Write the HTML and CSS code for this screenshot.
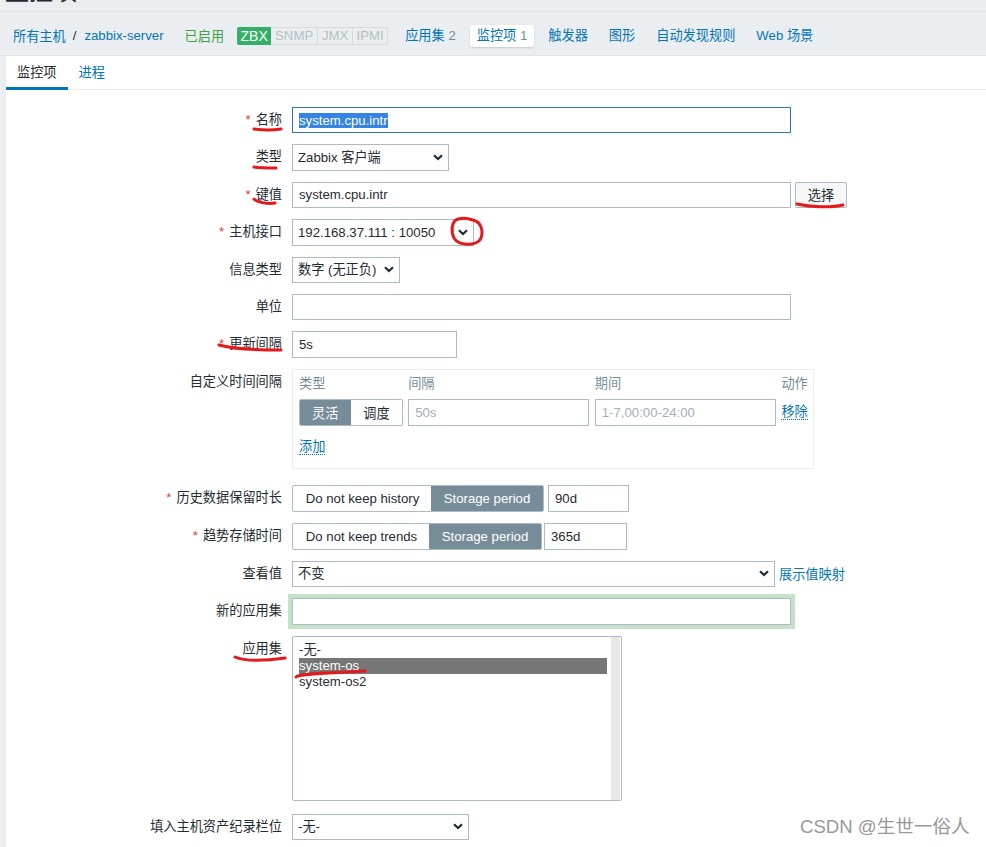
FILE: index.html
```html
<!DOCTYPE html>
<html lang="zh-CN">
<head>
    <meta charset="UTF-8">
    <title>监控项</title>
    <link rel="stylesheet" href="styles.css">
</head>
<body>
    <div class="Title"><h1>监控项</h1></div>

    <nav class="Nav">
        <a class="Nav-link" href="#">所有主机</a>
        <span class="Nav-sep">/</span>
        <a class="Nav-link" href="#">zabbix-server</a>
        <span class="Nav-status">已启用</span>
        <div class="Badges">
            <span class="Badge Badge--on">ZBX</span>
            <span class="Badge">SNMP</span>
            <span class="Badge">JMX</span>
            <span class="Badge">IPMI</span>
        </div>
        <a class="Nav-item" href="#">应用集 <span class="Nav-count">2</span></a>
        <a class="Nav-item Nav-item--active" href="#">监控项 <span class="Nav-count">1</span></a>
        <a class="Nav-item" href="#">触发器</a>
        <a class="Nav-item" href="#">图形</a>
        <a class="Nav-item" href="#">自动发现规则</a>
        <a class="Nav-item" href="#">Web 场景</a>
    </nav>

    <main class="Panel">
        <div class="Tabs">
            <a class="Tab Tab--active" href="#">监控项</a>
            <a class="Tab" href="#">进程</a>
        </div>

        <form class="Form" autocomplete="off">
            <label class="Form-label Form-label--req">名称</label>
            <div class="Form-field">
                <div class="Input Input--wide Input--focus"><span class="Input-selected">system.cpu.intr</span></div>
            </div>

            <label class="Form-label">类型</label>
            <div class="Form-field">
                <select class="Select Select--type"><option>Zabbix 客户端</option></select>
            </div>

            <label class="Form-label Form-label--req">键值</label>
            <div class="Form-field">
                <input class="Input Input--wide" type="text" value="system.cpu.intr">
                <button class="Button" type="button">选择</button>
            </div>

            <label class="Form-label Form-label--req">主机接口</label>
            <div class="Form-field">
                <select class="Select Select--iface"><option>192.168.37.111 : 10050</option></select>
            </div>

            <label class="Form-label">信息类型</label>
            <div class="Form-field">
                <select class="Select Select--info"><option>数字 (无正负)</option></select>
            </div>

            <label class="Form-label">单位</label>
            <div class="Form-field">
                <input class="Input Input--wide" type="text">
            </div>

            <label class="Form-label Form-label--req">更新间隔</label>
            <div class="Form-field">
                <input class="Input Input--delay" type="text" value="5s">
            </div>

            <label class="Form-label">自定义时间间隔</label>
            <div class="Intervals">
                <div class="Intervals-grid">
                    <span class="Intervals-head">类型</span>
                    <span class="Intervals-head">间隔</span>
                    <span class="Intervals-head">期间</span>
                    <span class="Intervals-head">动作</span>
                    <div class="Segment">
                        <span class="Segment-item Segment-item--on">灵活</span>
                        <span class="Segment-item">调度</span>
                    </div>
                    <input class="Input" type="text" placeholder="50s">
                    <input class="Input" type="text" placeholder="1-7,00:00-24:00">
                    <a class="Link" href="#">移除</a>
                </div>
                <a class="Link Intervals-add" href="#">添加</a>
            </div>

            <label class="Form-label Form-label--req">历史数据保留时长</label>
            <div class="Form-field Form-field--tall">
                <div class="Segment">
                    <span class="Segment-item Segment-item--history">Do not keep history</span>
                    <span class="Segment-item Segment-item--on Segment-item--period">Storage period</span>
                </div>
                <input class="Input Input--short" type="text" value="90d">
            </div>

            <label class="Form-label Form-label--req">趋势存储时间</label>
            <div class="Form-field Form-field--tall Form-field--trends">
                <div class="Segment">
                    <span class="Segment-item Segment-item--trends">Do not keep trends</span>
                    <span class="Segment-item Segment-item--on Segment-item--period">Storage period</span>
                </div>
                <input class="Input Input--short" type="text" value="365d">
            </div>

            <label class="Form-label">查看值</label>
            <div class="Form-field">
                <select class="Select Select--value"><option>不变</option></select>
                <a class="Nav-link" href="#">展示值映射</a>
            </div>

            <label class="Form-label">新的应用集</label>
            <div class="Form-field">
                <input class="Input Input--wide Input--new" type="text">
            </div>

            <label class="Form-label">应用集</label>
            <div class="Listbox">
                <ul class="Listbox-options">
                    <li>-无-</li>
                    <li class="is-selected">system-os</li>
                    <li>system-os2</li>
                </ul>
                <div class="Listbox-track"></div>
            </div>

            <label class="Form-label Form-label--inventory">填入主机资产纪录栏位</label>
            <div class="Form-field Form-field--inventory">
                <select class="Select Select--type Select--inventory"><option>-无-</option></select>
            </div>
        </form>
    </main>

    <!-- hand drawn red marks on top of the screenshot -->
    <svg class="Marks" width="986" height="847" viewBox="0 0 986 847" fill="none" stroke="#e3191c" stroke-width="3" stroke-linecap="round">
        <path d="M254 129 C262 130 274 130 281 129"/>
        <path d="M254 167 C260 168 270 168 276 168"/>
        <path d="M254 199 C258 203 268 204 275 203"/>
        <path d="M797 204 C810 207 830 208 843 205"/>
        <path d="M458 219 C451 221 451 232 454 238 C459 246 474 246 480 240 C484 233 482 222 473 220 C467 218 460 218 456 220"/>
        <path d="M219 345 C236 350 262 350 281 350"/>
        <path d="M235 657 C246 662 270 660 285 658"/>
        <path d="M296 677 C300 673 340 673 365 671"/>
    </svg>

    <div class="Watermark">CSDN @生世一俗人</div>
</body>
</html>
```

FILE: styles.css
```css
* {
    margin: 0;
    padding: 0;
    box-sizing: border-box;
}

html, body {
    height: 847px;
    overflow: hidden;
}

body {
    position: relative;
    font-family: "Liberation Sans", "Noto Sans CJK SC", sans-serif;
    font-size: 13.2px;
    color: #1f2c33;
    background: #ebeef0;
}

a {
    text-decoration: none;
}

.Title {
    height: 12px;
    overflow: hidden;
    border-bottom: 1px solid #dfe4e7;
}

.Title h1 {
    margin: -23px 0 0 5px;
    font-size: 24px;
    line-height: 30px;
    font-weight: 400;
}

.Nav {
    display: flex;
    align-items: center;
    height: 44px;
    padding: 4px 0 0 13px;
    border-bottom: 1px solid #dfe4e7;
}

.Nav-link {
    color: #0275b8;
    white-space: nowrap;
}

.Nav-sep {
    margin: 0 8px 0 7px;
    color: #1f2c33;
}

.Nav-status {
    margin: 0 13px 0 21px;
    color: #429e47;
}

.Badges {
    display: flex;
    height: 18px;
    margin-right: 10px;
}

.Badge {
    display: flex;
    align-items: center;
    justify-content: center;
    width: 35px;
    border: 1px solid #d5dadd;
    border-left: none;
    color: #b4bec4;
    background: #ebeef0;
}

.Badge:nth-child(2) {
    width: 47px;
}

.Badge--on {
    width: 34px;
    border: none;
    border-radius: 2px 0 0 2px;
    background: #34af67;
    color: #ffffff;
    font-size: 14px;
}

.Badge:last-child {
    width: 35px;
    border-radius: 0 2px 2px 0;
}

.Nav-item {
    margin-right: 7px;
    padding: 2px 7px;
    height: 22px;
    line-height: 18px;
    color: #0275b8;
    white-space: nowrap;
}

.Nav-item--active {
    background: #ffffff;
    border-radius: 2px;
    box-shadow: 0 1px 2px rgba(0, 0, 0, 0.15);
}

.Nav-count {
    color: #768d99;
}

.Panel {
    margin-left: 6px;
    height: 791px;
    background: #ffffff;
}

.Tabs {
    display: flex;
    height: 34px;
    border-bottom: 1px solid #ebeef0;
}

.Tab {
    height: 34px;
    padding: 0 11px;
    line-height: 34px;
    color: #0275b8;
}

.Tab--active {
    color: #1f2c33;
    border-bottom: 3px solid #0275b8;
}

.Form {
    display: grid;
    grid-template-columns: 276px 1fr;
    column-gap: 10px;
    row-gap: 11px;
    padding-top: 17px;
}

.Form-label {
    line-height: 26px;
    text-align: right;
    white-space: nowrap;
}

.Form-label--req::before {
    content: "*";
    margin-right: 5px;
    color: #e33734;
}

.Form-label--inventory {
    margin-top: 2px;
}

.Form-field {
    display: flex;
    align-items: center;
    gap: 4px;
    height: 26.4px;
}

.Form-field--tall {
    height: 27px;
}

.Form-field--trends {
    gap: 2px;
}

.Form-field--inventory {
    margin-top: 2px;
}

.Input {
    height: 26.4px;
    padding: 0 6px;
    border: 1px solid #acbbc5;
    font: inherit;
    color: inherit;
    background: #ffffff;
    outline: none;
}

.Input::placeholder {
    color: #a3afb7;
    opacity: 1;
}

.Input--wide {
    width: 499px;
}

.Input--delay {
    width: 165px;
}

.Input--short {
    width: 81px;
    height: 100%;
}

.Form-field--trends .Input--short {
    width: 83px;
}

.Input--focus {
    display: flex;
    align-items: center;
    border-color: #2a78a8;
}

.Input-selected {
    background: #3584e4;
    color: #ffffff;
    line-height: 15px;
}

.Input--new {
    box-shadow: 0 0 0 4px #c5e2c8;
    border-radius: 0;
}

.Select {
    height: 26.4px;
    padding-left: 5px;
    border: 1px solid #acbbc5;
    border-radius: 0;
    font: inherit;
    color: inherit;
    outline: none;
    appearance: none;
    background: #ffffff url("data:image/svg+xml,%3Csvg xmlns='http://www.w3.org/2000/svg' width='10' height='7'%3E%3Cpath d='M1 1.2 5 5l4-3.8' fill='none' stroke='%231f2c33' stroke-width='2.2'/%3E%3C/svg%3E") no-repeat right 5px center;
}

.Select--type {
    width: 157px;
}

.Select--iface {
    width: 182px;
}

.Select--info {
    width: 108px;
}

.Select--value {
    width: 483px;
}

.Select--inventory {
    width: 177px;
}

.Button {
    width: 52px;
    height: 100%;
    border: 1px solid #acbbc5;
    border-radius: 2px;
    font: inherit;
    color: #1f2c33;
    background: #f6f7f8;
}

.Link {
    color: #0275b8;
    border-bottom: 1px dotted #0275b8;
    line-height: 15px;
    width: fit-content;
    white-space: nowrap;
}

.Intervals {
    display: flex;
    flex-direction: column;
    align-items: flex-start;
    width: 522px;
    height: 100px;
    margin-bottom: 5px;
    padding: 3px 6px;
    border: 1px solid #ebeef0;
}

.Intervals-grid {
    display: grid;
    grid-template-columns: 103.6px 181px 181px 32px;
    column-gap: 5.6px;
    row-gap: 5px;
    align-items: center;
}

.Intervals-grid .Input {
    width: 100%;
    height: 27px;
}

.Intervals-head {
    line-height: 21px;
    color: #768d99;
    white-space: nowrap;
}

.Intervals-add {
    margin-top: 13px;
}

.Segment {
    display: flex;
    height: 27px;
    border: 1px solid #acbbc5;
    border-radius: 2px;
    overflow: hidden;
}

.Segment-item {
    display: flex;
    align-items: center;
    justify-content: center;
    width: 51px;
    white-space: nowrap;
}

.Segment-item--on {
    width: 53px;
    margin: -1px 0 -1px -1px;
    background: #768d99;
    color: #ffffff;
}

.Segment-item--history {
    width: 139px;
}

.Segment-item--trends {
    width: 137px;
}

.Segment-item--period {
    width: 112px;
}

.Listbox {
    display: flex;
    justify-content: space-between;
    width: 330px;
    height: 165px;
    padding-right: 1px;
    border: 1px solid #acbbc5;
    border-radius: 2px;
}

.Listbox-options {
    flex: 1;
    margin: 5px 4px 0 6px;
    list-style: none;
}

.Listbox-options li {
    height: 16px;
    line-height: 16px;
}

.Listbox-options .is-selected {
    background: #767676;
    color: #ffffff;
}

.Listbox-track {
    width: 9px;
    background: #e8e8e8;
}

.Marks {
    position: absolute;
    top: 0;
    left: 0;
    pointer-events: none;
}

.Watermark {
    position: absolute;
    top: 813px;
    left: 800px;
    font-size: 18.6px;
    line-height: 27px;
    color: #999999;
    white-space: nowrap;
}
```
